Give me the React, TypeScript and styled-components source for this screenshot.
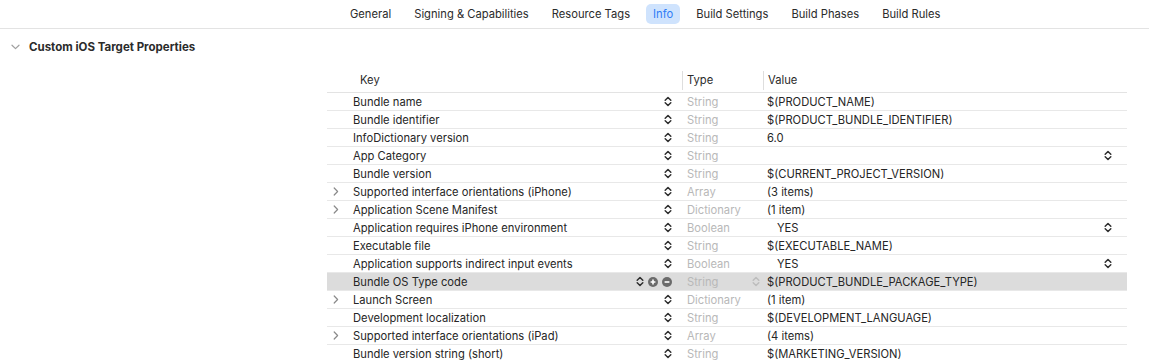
import React from "react"
import styled, { createGlobalStyle } from "styled-components"

const GlobalStyle = createGlobalStyle`
    body {
        margin: 0;
        background: #ffffff;
        font-family: Inter, "Liberation Sans", sans-serif;
        font-size: 11.2px;
        color: #262626;
    }
`

interface Entry {
    key: string;
    type: string;
    value: string;
    expandable?: boolean;
    popup?: boolean;
    selected?: boolean;
}

const entries: Entry[] = [
    { key: "Bundle name", type: "String", value: "$(PRODUCT_NAME)" },
    { key: "Bundle identifier", type: "String", value: "$(PRODUCT_BUNDLE_IDENTIFIER)" },
    { key: "InfoDictionary version", type: "String", value: "6.0" },
    { key: "App Category", type: "String", value: "", popup: true },
    { key: "Bundle version", type: "String", value: "$(CURRENT_PROJECT_VERSION)" },
    { key: "Supported interface orientations (iPhone)", type: "Array", value: "(3 items)", expandable: true },
    { key: "Application Scene Manifest", type: "Dictionary", value: "(1 item)", expandable: true },
    { key: "Application requires iPhone environment", type: "Boolean", value: "YES", popup: true },
    { key: "Executable file", type: "String", value: "$(EXECUTABLE_NAME)" },
    { key: "Application supports indirect input events", type: "Boolean", value: "YES", popup: true },
    { key: "Bundle OS Type code", type: "String", value: "$(PRODUCT_BUNDLE_PACKAGE_TYPE)", selected: true },
    { key: "Launch Screen", type: "Dictionary", value: "(1 item)", expandable: true },
    { key: "Development localization", type: "String", value: "$(DEVELOPMENT_LANGUAGE)" },
    { key: "Supported interface orientations (iPad)", type: "Array", value: "(4 items)", expandable: true },
    { key: "Bundle version string (short)", type: "String", value: "$(MARKETING_VERSION)" },
]

const tabs = ["General", "Signing & Capabilities", "Resource Tags", "Info", "Build Settings", "Build Phases", "Build Rules"]

const TabBar = styled.div`
    height: 28px;
    border-bottom: 1px solid #e3e3e3;
    display: flex;
    align-items: center;
    gap: 9px;
    padding-left: 343px;
`
const Tab = styled.div<{ $active?: boolean }>`
    height: 20px;
    line-height: 20px;
    padding: 0 7px;
    border-radius: 5px;
    color: ${props => props.$active ? "#2f7cf6" : "#2b2b2b"};
    background-color: ${props => props.$active ? "#cfe3fd" : "transparent"};
`
const SectionHeader = styled.div`
    display: flex;
    align-items: center;
    height: 36px;
    padding-left: 11px;
    gap: 9px;
    font-size: 11.5px;
    font-weight: 700;
    color: #2b2b2b;
`
const TableWrap = styled.div`
    padding-left: 327px;
    padding-top: 3px;
`
const Table = styled.div`
    width: 800px;
`
const Grid = styled.div`
    display: grid;
    grid-template-columns: 355px 81px 1fr;
`
const HeaderRow = styled(Grid)`
    height: 24px;
    align-items: center;
    border-bottom: 1px solid #e3e3e3;
    color: #2b2b2b;
`
const HeaderCell = styled.div<{ $first?: boolean }>`
    height: 19px;
    line-height: 19px;
    padding-left: ${props => props.$first ? "33px" : "4px"};
    border-left: ${props => props.$first ? "none" : "1px solid #dedede"};
`
const Row = styled(Grid)<{ $selected?: boolean }>`
    height: 17px;
    border-bottom: 1px solid #e8e8e8;
    background-color: ${props => props.$selected ? "#dcdcdc" : "transparent"};
    align-items: center;
`
const KeyCell = styled.div`
    display: flex;
    align-items: center;
    padding-right: 10px;
`
const Disclosure = styled.div`
    width: 26px;
    display: flex;
    padding-left: 6px;
    box-sizing: border-box;
`
const KeyText = styled.span`
    flex: 1;
    white-space: nowrap;
`
const TypeCell = styled.div`
    display: flex;
    align-items: center;
    padding-left: 5px;
    padding-right: 3px;
    color: #b8b8b8;
`
const TypeText = styled.span`
    flex: 1;
`
const ValueCell = styled.div<{ $popup?: boolean }>`
    display: flex;
    align-items: center;
    padding-left: ${props => props.$popup ? "14px" : "4px"};
    padding-right: 15px;
    white-space: nowrap;
`
const ValueText = styled.span`
    flex: 1;
`
const IconGroup = styled.div`
    display: flex;
    align-items: center;
    gap: 4px;
`

const Stepper: React.FC<{ color?: string }> = ({ color = "#2e2e2e" }) => (
    <svg width="8" height="11" viewBox="0 0 8 11">
        <path d="M1.2 4.2 L4 1.5 L6.8 4.2 M1.2 6.8 L4 9.5 L6.8 6.8" fill="none" stroke={color} strokeWidth="1.5" strokeLinecap="round" strokeLinejoin="round" />
    </svg>
)

const Chevron: React.FC = () => (
    <svg width="6" height="9" viewBox="0 0 6 9">
        <path d="M1.2 1 L4.6 4.5 L1.2 8" fill="none" stroke="#8a8a8a" strokeWidth="1.2" strokeLinecap="round" strokeLinejoin="round" />
    </svg>
)

const DownChevron: React.FC = () => (
    <svg width="9" height="6" viewBox="0 0 9 6">
        <path d="M1 1.2 L4.5 4.6 L8 1.2" fill="none" stroke="#a0a0a0" strokeWidth="1.2" strokeLinecap="round" strokeLinejoin="round" />
    </svg>
)

const CircleButton: React.FC<{ plus?: boolean }> = ({ plus }) => (
    <svg width="10" height="10" viewBox="0 0 10 10">
        <circle cx="5" cy="5" r="5" fill="#6b6b6b" />
        <path d={plus ? "M2.6 5 H7.4 M5 2.6 V7.4" : "M2.6 5 H7.4"} stroke="#ffffff" strokeWidth="1.6" />
    </svg>
)

const App: React.FC = () => {
    return (
        <>
            <GlobalStyle />
            <TabBar>
                {tabs.map(t => <Tab key={t} $active={t === "Info"}>{t}</Tab>)}
            </TabBar>
            <SectionHeader>
                <DownChevron />
                Custom iOS Target Properties
            </SectionHeader>
            <TableWrap>
                <Table>
                    <HeaderRow>
                        <HeaderCell $first>Key</HeaderCell>
                        <HeaderCell>Type</HeaderCell>
                        <HeaderCell>Value</HeaderCell>
                    </HeaderRow>
                    {entries.map(e => (
                        <Row key={e.key} $selected={e.selected}>
                            <KeyCell>
                                <Disclosure>{e.expandable && <Chevron />}</Disclosure>
                                <KeyText>{e.key}</KeyText>
                                {e.selected ? (
                                    <IconGroup>
                                        <Stepper />
                                        <CircleButton plus />
                                        <CircleButton />
                                    </IconGroup>
                                ) : <Stepper />}
                            </KeyCell>
                            <TypeCell>
                                <TypeText>{e.type}</TypeText>
                                {e.selected && <Stepper color="#bdbdbd" />}
                            </TypeCell>
                            <ValueCell $popup={e.popup}>
                                <ValueText>{e.value}</ValueText>
                                {e.popup && <Stepper />}
                            </ValueCell>
                        </Row>
                    ))}
                </Table>
            </TableWrap>
        </>
    )
}

export default App
